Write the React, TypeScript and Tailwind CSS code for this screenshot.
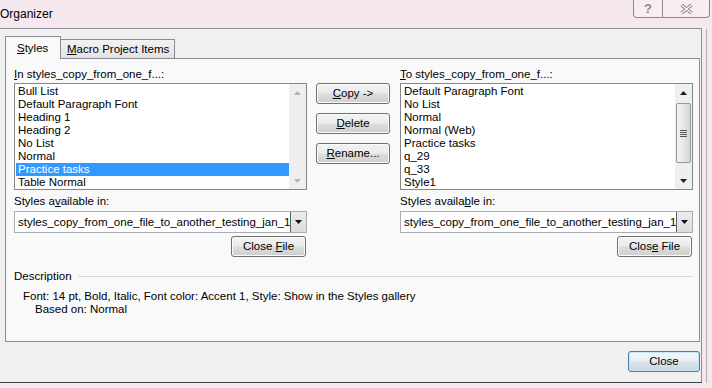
const leftStyles = [
  "Bull List",
  "Default Paragraph Font",
  "Heading 1",
  "Heading 2",
  "No List",
  "Normal",
  "Practice tasks",
  "Table Normal",
];

const rightStyles = [
  "Default Paragraph Font",
  "No List",
  "Normal",
  "Normal (Web)",
  "Practice tasks",
  "q_29",
  "q_33",
  "Style1",
];

const fileName = "styles_copy_from_one_file_to_another_testing_jan_13";

function Tri({ down = false, color }: { down?: boolean; color: string }) {
  return (
    <svg width="7" height="4" viewBox="0 0 7 4" aria-hidden>
      <path d={down ? "M0 0 L7 0 L3.5 4 Z" : "M0 4 L7 4 L3.5 0 Z"} fill={color} />
    </svg>
  );
}

function ScrollBar({ active }: { active: boolean }) {
  const arrow = active ? "#1e1e1e" : "#b4b4b4";
  return (
    <div className="flex h-full w-[17px] shrink-0 flex-col bg-[#efeff0]">
      <div className="flex h-[17px] items-center justify-center">
        <Tri color={arrow} />
      </div>
      <div className="flex-1 px-[1px] pt-[2px]">
        {active && (
          <div className="flex h-[60px] flex-col items-center justify-center gap-[1px] rounded-[2px] border border-[#979797] bg-[linear-gradient(90deg,#f4f4f4,#e6e6e6_50%,#d6d6d6)]">
            <span className="h-px w-[7px] bg-[#555]" />
            <span className="h-px w-[7px] bg-[#555]" />
            <span className="h-px w-[7px] bg-[#555]" />
            <span className="h-px w-[7px] bg-[#555]" />
          </div>
        )}
      </div>
      <div className="flex h-[17px] items-center justify-center">
        <Tri down color={arrow} />
      </div>
    </div>
  );
}

function ListBox({
  items,
  selected,
  scrollable,
}: {
  items: string[];
  selected?: number;
  scrollable: boolean;
}) {
  return (
    <div className="flex h-[107px] border border-[#828790] bg-white">
      <div className="flex-1 overflow-hidden pt-[1px]">
        {items.map((s, i) => (
          <div
            key={s}
            className={`ml-[1px] h-[13px] whitespace-nowrap pl-[2px] leading-[13px] ${
              i === selected ? "bg-[#3399ff] text-white" : ""
            }`}
          >
            {s}
          </div>
        ))}
      </div>
      <ScrollBar active={scrollable} />
    </div>
  );
}

function Button({
  children,
  className = "",
}: {
  children: React.ReactNode;
  className?: string;
}) {
  return (
    <div
      className={`flex h-[21px] items-center justify-center rounded-[3px] border border-[#707070] bg-[linear-gradient(#f3f3f3,#ebebeb_48%,#dddddd_52%,#cfcfcf)] shadow-[inset_0_0_0_1px_#fbfbfb] ${className}`}
    >
      <span className="whitespace-pre">{children}</span>
    </div>
  );
}

function Combo() {
  return (
    <div className="flex h-[22px] border border-[#abadb3] bg-white">
      <div className="min-w-0 flex-1 overflow-hidden whitespace-nowrap pl-[3px] leading-[20px]">
        {fileName}
      </div>
      <div className="flex w-[16px] shrink-0 items-center justify-center border-l border-[#5e5e5e] bg-[linear-gradient(#ececec,#dcdcdc)]">
        <Tri down color="#111" />
      </div>
    </div>
  );
}

function FileColumn({
  label,
  stylesLabel,
  items,
  selected,
  scrollable,
  closeFile,
}: {
  label: React.ReactNode;
  stylesLabel: React.ReactNode;
  items: string[];
  selected?: number;
  scrollable: boolean;
  closeFile: React.ReactNode;
}) {
  return (
    <div className="flex w-[293px] flex-col">
      <div className="h-[15px] leading-[13px]">{label}</div>
      <ListBox items={items} selected={selected} scrollable={scrollable} />
      <div className="mt-[5px] h-[16px] leading-[13px]">{stylesLabel}</div>
      <Combo />
      <Button className="mr-[1px] mt-[3px] w-[75px] self-end">{closeFile}</Button>
    </div>
  );
}

export default function App() {
  return (
    <div className="relative h-[388px] w-[712px] overflow-hidden bg-[#f5e7ee] font-['Liberation_Sans',Arial,sans-serif] text-[11.5px] leading-[13px] text-black">
      {/* title bar */}
      <div className="flex h-[28px] items-start">
        <div className="pt-[7px] text-[12px] leading-[14px]">Organizer</div>
        <div className="ml-auto mr-[2px] flex h-[18px] w-[77px] rounded-b-[4px] border border-t-0 border-[#8e8a8d] bg-[#f8eef2]">
          <div className="flex w-[29px] items-center justify-center border-r border-[#8e8a8d] text-[13px] font-bold text-[#8a8a8a]">
            ?
          </div>
          <div className="flex flex-1 items-center justify-center">
            <svg width="13" height="10" viewBox="0 0 13 10" aria-hidden>
              <path d="M1.5 1 L11.5 9 M11.5 1 L1.5 9" stroke="#8a8a8a" strokeWidth="3.4" />
              <path d="M1.5 1 L11.5 9 M11.5 1 L1.5 9" stroke="#fbf6f8" strokeWidth="1.4" />
            </svg>
          </div>
        </div>
      </div>

      <div className="flex">
        {/* client area */}
        <div className="flex h-[355px] w-[702px] flex-col border-r border-t border-[#8c8e94] border-b border-b-[#3f3f3f] bg-[#f0f0f1] pt-[7px]">
          {/* tabs */}
          <div className="ml-[5px] flex h-[22px] items-end">
            <div className="relative z-10 -mb-px flex h-[23px] w-[56px] items-start border-l border-r border-t border-[#898c95] bg-[#f9f9fa] pl-[11px] pt-[5px]">
              <span>
                <span className="underline">S</span>tyles
              </span>
            </div>
            <div className="flex h-[19px] w-[114px] items-center border-r border-t border-[#898c95] bg-[linear-gradient(#f2f2f2,#e3e3e3)] pl-[6px]">
              <span>
                <span className="underline">M</span>acro Project Items
              </span>
            </div>
          </div>

          {/* tab panel */}
          <div className="ml-[5px] flex h-[284px] w-[695px] flex-col border border-[#898c95] bg-[#f9f9fa] pl-[8px] pr-[6px] pt-[9px]">
            <div className="flex">
              <FileColumn
                label={
                  <>
                    <span className="underline">I</span>n styles_copy_from_one_f...:
                  </>
                }
                stylesLabel={
                  <>
                    Styles a<span className="underline">v</span>ailable in:
                  </>
                }
                items={leftStyles}
                selected={6}
                scrollable={false}
                closeFile={
                  <>
                    Close <span className="underline">F</span>ile
                  </>
                }
              />

              <div className="ml-[9px] flex w-[74px] flex-col gap-[9px] pt-[15px]">
                <Button>
                  <span className="underline">C</span>opy -&gt;
                </Button>
                <Button>
                  <span className="underline">D</span>elete
                </Button>
                <Button>
                  <span className="underline">R</span>ename...
                </Button>
              </div>

              <div className="ml-[10px]">
                <FileColumn
                  label={
                    <>
                      <span className="underline">T</span>o styles_copy_from_one_f...:
                    </>
                  }
                  stylesLabel={
                    <>
                      Styles availa<span className="underline">b</span>le in:
                    </>
                  }
                  items={rightStyles}
                  scrollable
                  closeFile={
                    <>
                      Clos<span className="underline">e</span> File
                    </>
                  }
                />
              </div>
            </div>

            {/* description */}
            <div className="mt-[13px] flex h-[13px] items-center">
              <span>Description</span>
              <span className="ml-[6px] h-px flex-1 bg-[#d9d9dc]" />
            </div>
            <div className="mt-[7px] pl-[9px]">
              <div className="h-[13px] whitespace-nowrap">
                Font: 14 pt, Bold, Italic, Font color: Accent 1, Style: Show in the Styles gallery
              </div>
              <div className="h-[13px] pl-[12px]">Based on: Normal</div>
            </div>
          </div>

          <div className="mr-[1px] mt-[9px] flex h-[21px] w-[72px] items-center justify-center self-end rounded-[3px] border border-[#3c7fb1] bg-[linear-gradient(#f2f6f9,#e9eff3_48%,#d9e3ea_52%,#cbd6de)] shadow-[inset_0_0_0_1px_#c8e6f8]">
            Close
          </div>
        </div>
        <div className="ml-[4px] mt-[1px] h-[354px] w-px bg-[#b9adb4]" />
      </div>
    </div>
  );
}
